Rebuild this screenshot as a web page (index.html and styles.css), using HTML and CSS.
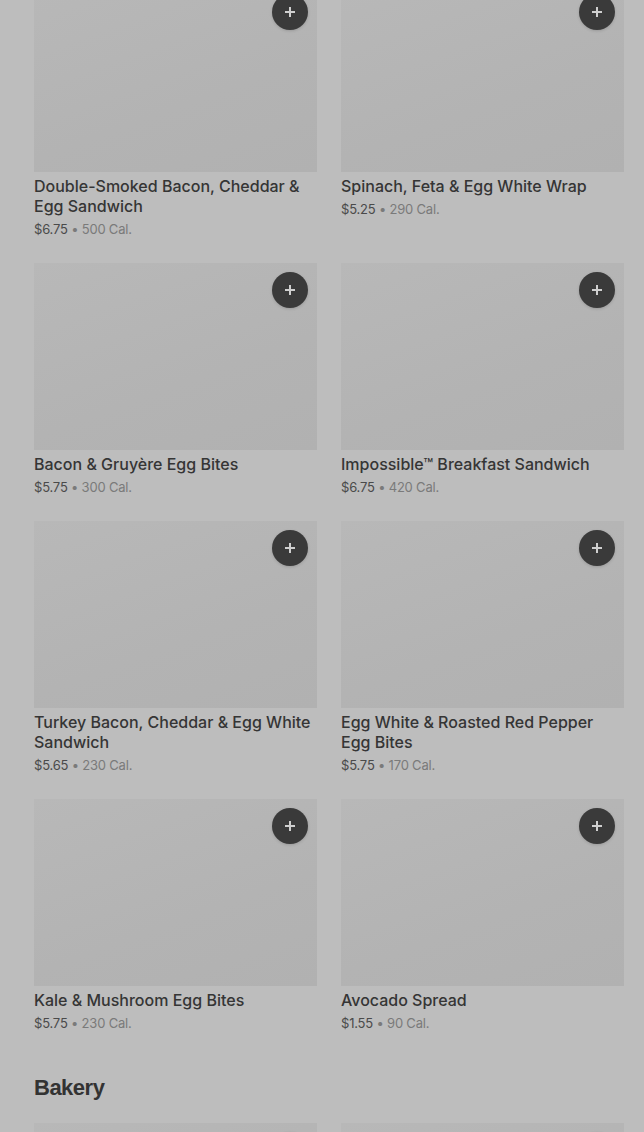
FILE: index.html
```html
<!DOCTYPE html>
<html>
<head>
<meta charset="utf-8">
<link rel="stylesheet" href="styles.css">
</head>
<body>
<div class="page">
  <div class="grid first">
    <div class="card"><div class="img"><button class="add"><svg viewBox="0 0 12 12" width="12" height="12"><path d="M6 1v10M1 6h10" stroke="#cfcfcf" stroke-width="2"/></svg></button></div><div class="title">Double-Smoked Bacon, Cheddar &amp; Egg Sandwich</div><div class="meta"><span class="price">$6.75</span> • 500 Cal.</div></div>
    <div class="card"><div class="img"><button class="add"><svg viewBox="0 0 12 12" width="12" height="12"><path d="M6 1v10M1 6h10" stroke="#cfcfcf" stroke-width="2"/></svg></button></div><div class="title">Spinach, Feta &amp; Egg White Wrap</div><div class="meta"><span class="price">$5.25</span> • 290 Cal.</div></div>
    <div class="card"><div class="img"><button class="add"><svg viewBox="0 0 12 12" width="12" height="12"><path d="M6 1v10M1 6h10" stroke="#cfcfcf" stroke-width="2"/></svg></button></div><div class="title">Bacon &amp; Gruyère Egg Bites</div><div class="meta"><span class="price">$5.75</span> • 300 Cal.</div></div>
    <div class="card"><div class="img"><button class="add"><svg viewBox="0 0 12 12" width="12" height="12"><path d="M6 1v10M1 6h10" stroke="#cfcfcf" stroke-width="2"/></svg></button></div><div class="title">Impossible™ Breakfast Sandwich</div><div class="meta"><span class="price">$6.75</span> • 420 Cal.</div></div>
    <div class="card"><div class="img"><button class="add"><svg viewBox="0 0 12 12" width="12" height="12"><path d="M6 1v10M1 6h10" stroke="#cfcfcf" stroke-width="2"/></svg></button></div><div class="title">Turkey Bacon, Cheddar &amp; Egg White Sandwich</div><div class="meta"><span class="price">$5.65</span> • 230 Cal.</div></div>
    <div class="card"><div class="img"><button class="add"><svg viewBox="0 0 12 12" width="12" height="12"><path d="M6 1v10M1 6h10" stroke="#cfcfcf" stroke-width="2"/></svg></button></div><div class="title">Egg White &amp; Roasted Red Pepper Egg Bites</div><div class="meta"><span class="price">$5.75</span> • 170 Cal.</div></div>
    <div class="card"><div class="img"><button class="add"><svg viewBox="0 0 12 12" width="12" height="12"><path d="M6 1v10M1 6h10" stroke="#cfcfcf" stroke-width="2"/></svg></button></div><div class="title">Kale &amp; Mushroom Egg Bites</div><div class="meta"><span class="price">$5.75</span> • 230 Cal.</div></div>
    <div class="card"><div class="img"><button class="add"><svg viewBox="0 0 12 12" width="12" height="12"><path d="M6 1v10M1 6h10" stroke="#cfcfcf" stroke-width="2"/></svg></button></div><div class="title">Avocado Spread</div><div class="meta"><span class="price">$1.55</span> • 90 Cal.</div></div>
  </div>
  <h2 class="section">Bakery</h2>
  <div class="grid">
    <div class="card"><div class="img"><button class="add"><svg viewBox="0 0 12 12" width="12" height="12"><path d="M6 1v10M1 6h10" stroke="#cfcfcf" stroke-width="2"/></svg></button></div></div>
    <div class="card"><div class="img"><button class="add"><svg viewBox="0 0 12 12" width="12" height="12"><path d="M6 1v10M1 6h10" stroke="#cfcfcf" stroke-width="2"/></svg></button></div></div>
  </div>
</div>
</body>
</html>
```
FILE: styles.css
```css
html, body {
  margin: 0;
  padding: 0;
  background: #bdbdbd;
  overflow: hidden;
}
.page {
  padding: 0 20px 0 34px;
  font-family: Inter, Roboto, "Liberation Sans", sans-serif;
  color: #333;
}
.grid {
  display: grid;
  grid-template-columns: 283px 283px;
  column-gap: 24px;
  row-gap: 24px;
}
.grid.first {
  margin-top: -15px;
}
.card {
  display: flex;
  flex-direction: column;
}
.img {
  position: relative;
  height: 187px;
  background: linear-gradient(160deg, #b8b8b8 0%, #b3b3b3 60%, #b1b1b1 100%);
}
.add {
  position: absolute;
  top: 9px;
  right: 9px;
  width: 36px;
  height: 36px;
  border-radius: 50%;
  border: none;
  padding: 0;
  background: #3a3a3a;
  display: flex;
  align-items: center;
  justify-content: center;
  box-shadow: 0 1px 3px rgba(0,0,0,0.15);
}
.title {
  margin-top: 4px;
  font-size: 16px;
  line-height: 20px;
  font-weight: 500;
  color: #353535;
}
.meta {
  margin-top: 3px;
  font-size: 13px;
  line-height: 20px;
  letter-spacing: -0.2px;
  color: #7a7a7a;
}
.price {
  color: #4a4a4a;
}
.section {
  margin: 40px 0 20px;
  font-size: 22px;
  line-height: 30px;
  font-weight: 700;
  font-family: "Liberation Sans", sans-serif;
  letter-spacing: -0.5px;
  color: #333;
}
```
